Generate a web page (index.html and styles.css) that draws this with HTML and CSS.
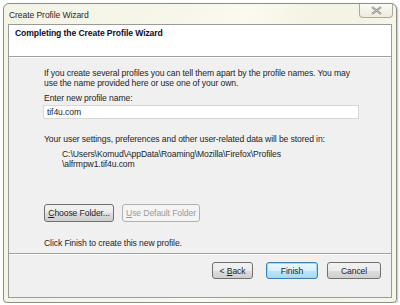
FILE: index.html
```html
<!DOCTYPE html>
<html lang="en">
<head>
    <meta charset="UTF-8">
    <title>Create Profile Wizard</title>
    <link rel="stylesheet" href="styles.css">
</head>
<body>
    <div class="window">
        <div class="titlebar">
            <span class="title">Create Profile Wizard</span>
            <div class="close-btn">
                <svg width="11" height="9" viewBox="0 0 11 9">
                    <path d="M1 1 L10 8 M10 1 L1 8" stroke="#7a7a7a" stroke-width="2" fill="none"/>
                    <path d="M1 1 L10 8 M10 1 L1 8" stroke="#f4f4f4" stroke-width="0.7" fill="none"/>
                </svg>
            </div>
        </div>
        <div class="client">
            <div class="header">
                <h1>Completing the Create Profile Wizard</h1>
            </div>
            <div class="content">
                <p class="intro">If you create several profiles you can tell them apart by the profile names. You may<br>use the name provided here or use one of your own.</p>
                <label for="profile_name">Enter new profile name:</label>
                <input type="text" id="profile_name" value="tif4u.com">
                <p class="stored">Your user settings, preferences and other user-related data will be stored in:</p>
                <p class="path">C:\Users\Komud\AppData\Roaming\Mozilla\Firefox\Profiles<br>\alfrmpw1.tif4u.com</p>
                <div class="folder-row">
                    <button class="btn choose"><u>C</u>hoose Folder...</button>
                    <button class="btn disabled"><u>U</u>se Default Folder</button>
                </div>
                <p class="finish-note">Click Finish to create this new profile.</p>
            </div>
            <div class="footer">
                <button class="btn back">&lt; <u>B</u>ack</button>
                <button class="btn default">Finish</button>
                <button class="btn cancel">Cancel</button>
            </div>
        </div>
    </div>
</body>
</html>
```

FILE: styles.css
```css
/* Create Profile Wizard */
body {
    margin: 0;
    background-color: #fff;
    font-family: "Liberation Sans", Arial, sans-serif;
    font-size: 8.6px;
    letter-spacing: -0.1px;
    color: #1e1e1e;
}

.window {
    margin: 3px 0 0 3px;
    width: 392px;
    height: 298px;
    border: 1px solid #8d8d87;
    border-radius: 6px 6px 4px 4px;
    background: linear-gradient(100deg, #f3f3e6 0%, #f6f6ea 40%, #fafaf0 55%, #f4f4e4 70%, #f5f5ea 100%);
    box-shadow: 1px 1px 2px rgba(0, 0, 0, 0.25);
    display: flex;
    flex-direction: column;
}

.titlebar {
    height: 20px;
    flex-shrink: 0;
    display: flex;
    justify-content: space-between;
    align-items: flex-start;
    padding-left: 5px;
}

.title {
    line-height: 12px;
    padding-top: 5px;
    color: #2a2a2a;
}

.close-btn {
    width: 32px;
    height: 13px;
    margin-right: 3px;
    border: 1px solid #a9a9a0;
    border-top: none;
    border-radius: 0 0 4px 4px;
    background: linear-gradient(#fbfbf4, #ececdf);
    display: flex;
    align-items: center;
    justify-content: center;
}

.client {
    flex: 1;
    margin: 0 4px 4px 4px;
    border: 1px solid #9a9a96;
    background-color: #f0f0f0;
    display: flex;
    flex-direction: column;
}

.header {
    height: 31px;
    flex-shrink: 0;
    background-color: #fff;
    border-bottom: 1px solid #a0a0a0;
}

h1 {
    margin: 0;
    padding: 2px 0 0 6px;
    font-size: 8.6px;
    line-height: 12px;
    font-weight: bold;
    color: #0c0c2a;
}

.content {
    flex: 1;
    padding: 10px 0 0 35px;
    border-top: 1px solid #fff;
}

.content p {
    margin: 0;
    line-height: 10px;
    white-space: nowrap;
}

label {
    display: block;
    margin-top: 5px;
    line-height: 10px;
}

input[type="text"] {
    display: block;
    margin: 2px 0 0 -1px;
    width: 316px;
    height: 14px;
    padding: 0 3px;
    border: 1px solid #d8d8d8;
    background-color: #fff;
    font-family: inherit;
    font-size: 8.6px;
    letter-spacing: -0.1px;
    color: #1e1e1e;
    box-sizing: border-box;
}

.content .stored {
    margin-top: 15px;
}

.content .path {
    margin-top: 5px;
    padding-left: 18px;
}

.folder-row {
    display: flex;
    gap: 8px;
    margin-top: 35px;
}

.btn {
    height: 18px;
    padding: 0;
    border: 1px solid #707070;
    border-radius: 3px;
    background: linear-gradient(#f2f2f2 0%, #ebebeb 50%, #dddddd 51%, #cfcfcf 100%);
    font-family: inherit;
    font-size: 8.6px;
    letter-spacing: -0.1px;
    color: #1e1e1e;
    line-height: 14px;
}

.btn.choose {
    width: 70px;
}

.btn.disabled {
    width: 78px;
    border-color: #adb2b5;
    background: #f4f4f4;
    color: #9a9a9a;
}

.content .finish-note {
    margin-top: 16px;
}

.footer {
    height: 35px;
    flex-shrink: 0;
    border-top: 1px solid #a0a0a0;
    box-shadow: inset 0 1px 0 #fff;
    display: flex;
    align-items: flex-start;
    justify-content: flex-end;
    padding: 8px 10px 0 0;
}

.footer .btn {
    height: 17px;
}

.btn.back {
    width: 41px;
}

.btn.default {
    width: 52px;
    margin-left: 13px;
    border-color: #3c7fb1;
    box-shadow: inset 0 0 0 1px #a4d8f3;
    background: linear-gradient(#eaf6fd 0%, #d9f0fc 50%, #bee6fd 51%, #a7d9f5 100%);
}

.btn.cancel {
    width: 54px;
    margin-left: 9px;
}
```
